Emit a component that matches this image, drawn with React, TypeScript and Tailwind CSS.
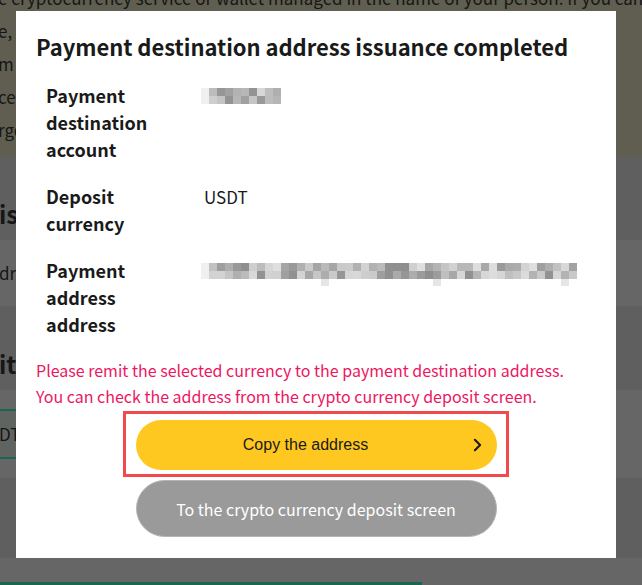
import React from 'react'

const FONT = '"Noto Sans CJK JP", "Noto Sans", sans-serif'

// 簡易擬似乱数 — モザイクの濃淡を毎回同じにするため
function grays(count: number, seed: number, light = 200, dark = 150) {
  const out: string[] = []
  let s = seed
  for (let i = 0; i < count; i++) {
    s = (s * 9301 + 49297) % 233280
    const v = Math.round(dark + (s / 233280) * (light - dark))
    out.push(`rgb(${v},${v},${v})`)
  }
  return out
}

function Mosaic({ cols, rows, seed, tail }: { cols: number; rows: number; seed: number; tail?: number[] }) {
  const cells = grays(cols * rows, seed, 225, 140)
  return (
    <div className="flex flex-col">
      {Array.from({ length: rows }).map((_, r) => (
        <div key={r} className="flex">
          {Array.from({ length: cols }).map((_, c) => (
            <span
              key={c}
              className="block w-[8px] h-[8px]"
              style={{ background: c === 0 ? '#f0f0f0' : cells[r * cols + c] }}
            />
          ))}
        </div>
      ))}
      {tail && (
        <div className="flex">
          {Array.from({ length: cols }).map((_, c) => (
            <span
              key={c}
              className="block w-[8px] h-[7px]"
              style={{ background: tail.includes(c) ? '#e6e6e6' : 'transparent' }}
            />
          ))}
        </div>
      )}
    </div>
  )
}

function Background() {
  return (
    <div className="flex flex-col w-[642px] h-[585px] text-[#161616]" style={{ fontFamily: FONT }}>
      <div className="h-[157px] shrink-0 bg-[#5f5e51] overflow-hidden">
        <div className="-mt-[19px] -ml-[2px] text-[17px] leading-[33px] whitespace-nowrap">
          <div>e cryptocurrency service or wallet managed in the name of your person. If you can confirm</div>
          <div>e, w</div>
          <div>m</div>
          <div>ce</div>
          <div>rge</div>
        </div>
      </div>
      <div className="h-[83px] shrink-0 bg-[#5f5f5f] flex items-end pb-[8px]">
        <span className="-ml-[1px] text-[24px] font-bold leading-[36px]">is</span>
      </div>
      <div className="h-[66px] shrink-0 bg-[#666666] flex items-center">
        <span className="-ml-[1px] text-[17px]">dr</span>
      </div>
      <div className="h-[84px] shrink-0 bg-[#5f5f5f] flex items-end pb-[8px]">
        <span className="-ml-[1px] text-[24px] font-bold leading-[36px]">it</span>
      </div>
      <div className="h-[88px] shrink-0 bg-[#666666] pt-[19px]">
        <div className="h-[50px] w-[422px] border-y-2 border-[#1b6650] bg-[#5f6461] flex items-center">
          <span className="-ml-[1px] text-[17px]">DT</span>
        </div>
      </div>
      <div className="h-[80px] shrink-0 bg-[#5f5f5f]" />
      <div className="h-[27px] shrink-0 bg-[#666666] pt-[24px] overflow-hidden">
        <div className="h-[10px] w-[422px] border-t-[3px] border-[#1b6650]" />
      </div>
    </div>
  )
}

function Row({ label, children }: { label: React.ReactNode; children: React.ReactNode }) {
  return (
    <div className="flex pl-[30px]">
      <div className="w-[155px] shrink-0 text-[18px] font-bold leading-[27px] text-[#1a1a1a]">{label}</div>
      <div className="flex-1 text-[17px] leading-[27px] text-[#1a1a1a]">{children}</div>
    </div>
  )
}

export default function App() {
  return (
    <div className="relative w-[642px] h-[585px] overflow-hidden">
      <Background />

      <div
        className="absolute left-4 top-[11px] w-[600px] h-[547px] bg-white flex flex-col pt-[19px]"
        style={{ fontFamily: FONT }}
      >
        <h2 className="pl-[20px] text-[22px] tracking-[-0.05px] font-bold leading-[33px] text-[#1a1a1a]">
          Payment destination address issuance completed
        </h2>

        <div className="mt-[19px] flex flex-col gap-[20px]">
          <Row label={<>Payment<br />destination<br />account</>}>
            <div className="pt-[6px]">
              <Mosaic cols={10} rows={2} seed={7} />
            </div>
          </Row>
          <Row label={<>Deposit<br />currency</>}>
            <span className="pl-[3px]">USDT</span>
          </Row>
          <Row label={<>Payment<br />address<br />address</>}>
            <div className="pt-[6px]">
              <Mosaic cols={47} rows={2} seed={31} tail={[15, 29, 45]} />
            </div>
          </Row>
        </div>

        <p className="mt-[19px] pl-[20px] text-[16px] leading-[26px] text-[#ec1762]">
          Please remit the selected currency to the payment destination address.
          <br />
          You can check the address from the crypto currency deposit screen.
        </p>

        <div className="mt-[2px] self-center w-[386px] h-[66px] border-[3px] border-[#f04a4c] pl-[10px] pr-[9px] pt-[6px]">
          <button
            type="button"
            className="relative w-full h-[50px] rounded-full bg-[#fec821] flex items-center justify-center pr-[22px] text-[16px] text-[#1a1a1a]"
            style={{ fontFamily: '"Liberation Sans", Arial, sans-serif' }}
          >
            Copy the address
            <svg
              viewBox="0 0 10 16"
              className="absolute right-[15px] top-1/2 -translate-y-1/2 w-[9px] h-[14px]"
              fill="none"
              stroke="#1a1a1a"
              strokeWidth="2.4"
              strokeLinecap="round"
              strokeLinejoin="round"
            >
              <path d="M2 2 L8 8 L2 14" />
            </svg>
          </button>
        </div>

        <button
          type="button"
          className="mt-[3px] self-center w-[361px] h-[57px] rounded-full bg-[#9a9a9a] border border-[#b4b4b4] text-[16px] text-white"
        >
          To the crypto currency deposit screen
        </button>
      </div>
    </div>
  )
}
